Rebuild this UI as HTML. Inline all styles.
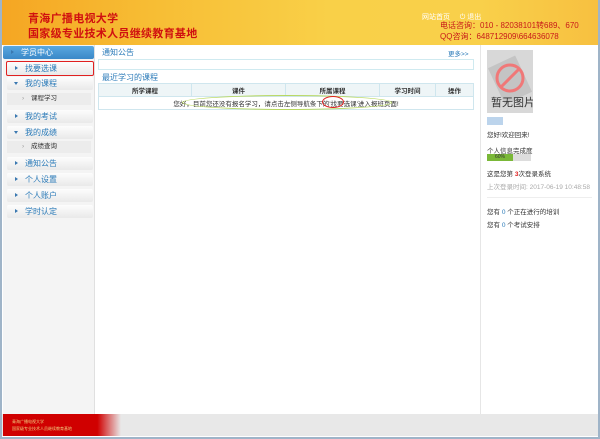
<!DOCTYPE html>
<html><head><meta charset="utf-8"><style>
*{margin:0;padding:0;box-sizing:border-box}
body{width:600px;height:439px;overflow:hidden;background:#9fb4c8;font-family:"Liberation Sans","Noto Sans CJK SC",sans-serif;position:relative}
.win{position:absolute;left:2px;top:0;width:596px;height:437px;background:#fff}
.hd{position:absolute;left:0;top:0;width:596px;height:45px;background:linear-gradient(90deg,#f5a623 0%,#f7bd34 25%,#f9d048 55%,#f9d04a 80%,#f7c040 100%)}
.hd .t{position:absolute;left:26px;color:#d01010;font-weight:bold;font-size:11px;letter-spacing:0.3px;white-space:nowrap}
.hd .nav{position:absolute;left:420px;top:12px;font-size:7px;color:#fff;white-space:nowrap}
.hd .ph{position:absolute;left:438px;color:#c81a1a;font-size:8px;white-space:nowrap}
.sb{position:absolute;left:1px;top:45px;width:92px;height:369px;background:#f4f4f4;border-right:1px solid #e0e0e0}
.it{position:absolute;left:4px;width:86px;height:13px;background:linear-gradient(#fdfdfd,#e9e9e9);border-radius:2px;font-size:8px;color:#2a7ab8;line-height:13px;padding-left:18px}
.it:before{content:"";position:absolute;left:8px;top:4px;border-left:3px solid #3a78b0;border-top:2.5px solid transparent;border-bottom:2.5px solid transparent}
.it.dn:before{left:7px;top:5px;border-top:3px solid #3a78b0;border-left:2.5px solid transparent;border-right:2.5px solid transparent;border-bottom:0}
.sub{position:absolute;left:4px;width:84px;height:12px;background:#ececec;font-size:6.5px;color:#333;line-height:12px;padding-left:24px}
.sub:before{content:"›";position:absolute;left:15px;color:#999}
.mn{position:absolute;left:100px;font-size:8px;color:#2a7ab8}
table{position:absolute;left:96px;top:83px;width:376px;border-collapse:collapse;font-size:6.5px}
td,th{border:1px solid #cfe6ee;height:13px;text-align:center;color:#333}
th{background:#eef5f7;font-weight:bold}
.rt{position:absolute;left:478px;top:45px;width:117px;height:369px;border-left:1px solid #e6e6e6;font-size:6.5px;color:#333}
.ft{position:absolute;left:0;top:414px;width:596px;height:22px;background:#e8e8e8}
.ft .r{position:absolute;left:1px;top:0;width:118px;height:22px;background:linear-gradient(90deg,#d00000 80%,#e8e8e8)}
</style></head><body><div class="win">
<div class="hd">
<div class="t" style="top:10px">青海广播电视大学</div>
<div class="t" style="top:25px">国家级专业技术人员继续教育基地</div>
<div class="nav">网站首页 &nbsp;&nbsp;&nbsp; ⏻ 退出</div>
<div class="ph" style="top:20px">电话咨询：010 - 82038101转689、670</div>
<div class="ph" style="top:31px">QQ咨询：648712909\664636078</div>
</div>
<div class="sb">
<div class="it" style="top:1px;left:0;width:91px;background:linear-gradient(#5aa8e0,#3a88c8);color:#fff">学员中心</div>
<div class="it" style="top:16px;border:1.5px solid #e02020;height:15px;left:3px;width:88px">找要选课</div>
<div class="it dn" style="top:32px">我的课程</div>
<div class="sub" style="top:48px">课程学习</div>
<div class="it" style="top:65px">我的考试</div>
<div class="it dn" style="top:81px">我的成绩</div>
<div class="sub" style="top:96px">成绩查询</div>
<div class="it" style="top:112px">通知公告</div>
<div class="it" style="top:128px">个人设置</div>
<div class="it" style="top:144px">个人账户</div>
<div class="it" style="top:160px">学时认定</div>
</div>
<div class="mn" style="top:47px">通知公告</div>
<div class="mn" style="top:48px;left:446px;font-size:6.5px">更多&gt;&gt;</div>
<div style="position:absolute;left:96px;top:59px;width:376px;height:11px;border:1px solid #cfeaf0"></div>
<div class="mn" style="top:72px">最近学习的课程</div>
<table><tr><th style="width:93px">所学课程</th><th style="width:94px">课件</th><th style="width:94px">所属课程</th><th style="width:56px">学习时间</th><th>操作</th></tr>
<tr><td colspan="5" style="position:relative">您好，目前您还没有报名学习，请点击左侧导航条下的'找要选课'进入报班页面!</td></tr></table>
<div style="position:absolute;left:180px;top:95px;width:210px;height:15px;border:1px solid #b8d860;border-radius:50%"></div>
<div style="position:absolute;left:320px;top:96px;width:22px;height:12px;border:1.5px solid #e02020;border-radius:50%"></div>
<div class="rt">
<div style="position:absolute;left:6px;top:5px;width:46px;height:63px;background:#d8d8d8"><svg width="46" height="63"><rect x="8" y="10" width="30" height="40" fill="#c4c4c4" transform="rotate(-25 23 30)"/><circle cx="23" cy="28" r="13" fill="none" stroke="#f07878" stroke-width="3"/><line x1="14" y1="37" x2="32" y2="19" stroke="#f07878" stroke-width="3"/><text x="4" y="56" font-size="11" fill="#333" font-family="Noto Sans CJK SC">暂无图片</text></svg></div>
<div style="position:absolute;left:6px;top:72px;color:#2a7ab8;font-weight:bold;background:#bcd4ec;width:16px;height:8px"></div>
<div style="position:absolute;left:6px;top:84px">您好!欢迎回来!</div>
<div style="position:absolute;left:6px;top:100px">个人信息完成度</div>
<div style="position:absolute;left:6px;top:109px;width:44px;height:7px;background:#ddd"><div style="width:26px;height:7px;background:#7ab838;font-size:5px;line-height:7px;padding-left:8px">60%</div></div>
<div style="position:absolute;left:6px;top:123px">这是您第 <b style="color:#e02020">3</b>次登录系统</div>
<div style="position:absolute;left:6px;top:136px;color:#aaa">上次登录时间: 2017-06-19 10:48:58</div>
<div style="position:absolute;left:6px;top:152px;width:105px;border-top:1px solid #eee"></div>
<div style="position:absolute;left:6px;top:161px">您有 <span style="color:#2a7ab8">0</span> 个正在进行的培训</div>
<div style="position:absolute;left:6px;top:174px">您有 <span style="color:#2a7ab8">0</span> 个考试安排</div>
</div>
<div class="ft"><div class="r"><div style="color:#f0d080;font-size:4px;padding:4px 0 0 9px;line-height:7px">青海广播电视大学<br>国家级专业技术人员继续教育基地</div></div></div>
</div></body></html>
